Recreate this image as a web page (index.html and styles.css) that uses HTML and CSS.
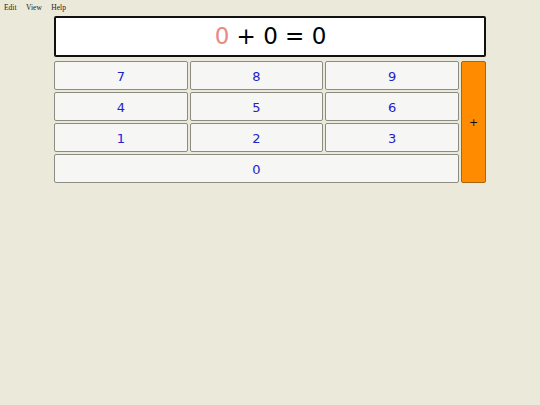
FILE: index.html
```html
<!DOCTYPE html>
<html>
<head>
<meta charset="utf-8">
<link rel="stylesheet" href="styles.css">
</head>
<body>
<nav class="menubar">
  <span class="menu-item">Edit</span>
  <span class="menu-item">View</span>
  <span class="menu-item">Help</span>
</nav>
<main class="calc">
  <div class="display"><span class="expr"><span class="operand">0</span> + 0 = 0</span></div>
  <div class="keypad">
    <button class="key k7">7</button>
    <button class="key">8</button>
    <button class="key">9</button>
    <button class="key plus">+</button>
    <button class="key">4</button>
    <button class="key">5</button>
    <button class="key">6</button>
    <button class="key">1</button>
    <button class="key">2</button>
    <button class="key">3</button>
    <button class="key zero">0</button>
  </div>
</main>
</body>
</html>
```

FILE: styles.css
```css
html, body {
  margin: 0;
  padding: 0;
  background: #ebe9d9;
  height: 100%;
}
.menubar {
  display: flex;
  height: 16px;
  padding: 3px 0 0 4px;
  box-sizing: border-box;
  font-family: "Liberation Serif", serif;
  font-size: 7.5px;
  line-height: 9px;
  color: #222;
  gap: 9.5px;
}
.calc {
  width: 432px;
  margin-left: 54px;
  display: flex;
  flex-direction: column;
  gap: 4px;
}
.display {
  height: 41px;
  box-sizing: border-box;
  border: 2px solid #111;
  border-radius: 2px;
  background: #fff;
  font-family: "DejaVu Sans", sans-serif;
  font-size: 23px;
  line-height: 41px;
  display: flex;
  align-items: center;
  justify-content: center;
  color: #000;
  padding-left: 1px;
}
.expr {
  white-space: pre;
}
.operand {
  color: #e88888;
}
.keypad {
  display: grid;
  grid-template-columns: 1fr 1fr 1fr 25px;
  grid-template-rows: repeat(4, 1fr);
  column-gap: 2px;
  row-gap: 2px;
  height: 122px;
}
.key {
  margin: 0;
  padding: 0;
  background: #f6f6f4;
  border: 1px solid #8c8c82;
  border-radius: 2px;
  font-family: "DejaVu Sans", sans-serif;
  font-size: 13px;
  color: #2222cc;
  padding-top: 1px;
}
.plus {
  grid-column: 4;
  grid-row: 1 / span 4;
  background: #ff8c00;
  border-color: #a86414;
  color: #111;
  font-size: 11px;
}
.zero {
  grid-column: 1 / span 3;
}
```
